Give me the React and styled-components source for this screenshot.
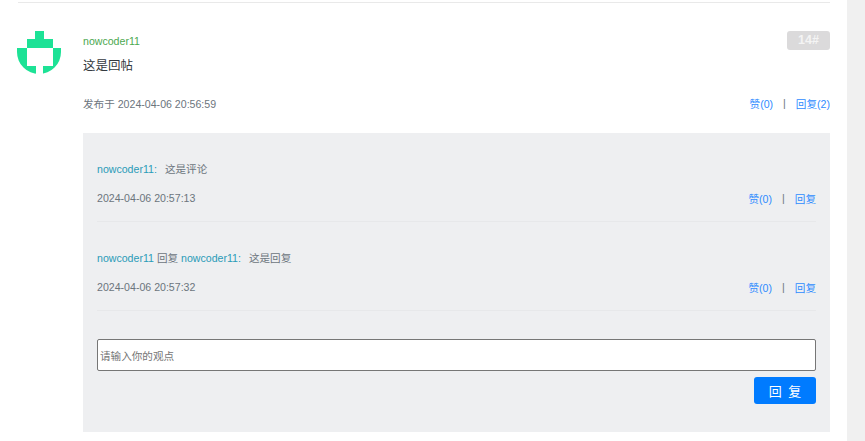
import React from 'react';
import styled, { createGlobalStyle } from 'styled-components';

const GlobalStyle = createGlobalStyle`
  html, body {
    margin: 0;
    padding: 0;
    background: #fff;
    overflow: hidden;
  }
  body {
    font-family: "Liberation Sans", Arial, "Noto Sans CJK SC", sans-serif;
    font-size: 10.6px;
    color: #6c757d;
  }
`;

const Page = styled.div`
  display: flex;
  width: 865px;
  height: 441px;
  overflow: hidden;
`;

const Content = styled.div`
  flex: 1;
  padding: 2px 17px 0 18px;
`;

const Scrollbar = styled.div`
  width: 18px;
  background: #f0f0f0;
`;

const Post = styled.div`
  display: flex;
  border-top: 1px solid #e9e9e9;
  padding-top: 28px;
`;

const Avatar = styled.svg`
  flex: none;
  width: 44px;
  height: 44px;
  margin-left: -1px;
  margin-right: 22px;
`;

const Body = styled.div`
  flex: 1;
  min-width: 0;
`;

const TopRow = styled.div`
  display: flex;
  justify-content: space-between;
  align-items: flex-start;
  height: 25px;
`;

const UserName = styled.span`
  font-size: 10.6px;
  line-height: 20px;
  color: #4ca84f;
`;

const Floor = styled.span`
  width: 43px;
  height: 19px;
  border-radius: 3px;
  background: #dbdadb;
  color: #f4f4f4;
  font-size: 12.5px;
  font-weight: 700;
  line-height: 19px;
  text-align: center;
`;

const PostText = styled.div`
  font-size: 12.5px;
  line-height: 20px;
  color: #343a40;
`;

const MetaRow = styled.div`
  display: flex;
  justify-content: space-between;
  align-items: center;
  height: 16px;
  margin-top: ${p => p.$top}px;
  color: #6c757d;
`;

const Links = styled.div`
  display: flex;
  align-items: center;
  gap: 10px;
  color: #2f8cff;
`;

const Sep = styled.span`
  color: #6c757d;
`;

const CommentBox = styled.div`
  margin-top: 22px;
  height: 299px;
  background: #eeeff1;
  padding: 0 14px;
`;

const Comment = styled.div`
  box-sizing: border-box;
  height: 89px;
  padding-top: 28px;
  border-bottom: 1px solid #e7e8ea;
`;

const CommentLine = styled.div`
  line-height: 16px;
  height: 16px;
  color: #6c757d;
`;

const Who = styled.span`
  color: #2a9bb8;
`;

const Said = styled.span`
  margin-left: 8px;
`;

const InputBox = styled.div`
  margin-top: 28px;
  display: flex;
  align-items: center;
  box-sizing: border-box;
  height: 32px;
  background: #fff;
  border: 1px solid #767676;
  border-radius: 2px;
  padding-left: 2px;
  color: #757575;
`;

const ButtonRow = styled.div`
  display: flex;
  justify-content: flex-end;
  margin-top: 6px;
`;

const ReplyButton = styled.button`
  width: 62px;
  height: 27px;
  padding: 0;
  border: 0;
  border-radius: 3px;
  background: #007bff;
  color: #fff;
  font-family: inherit;
  font-size: 13px;
  word-spacing: 3px;
`;

const Logo = () => (
  <Avatar viewBox="0 0 44 44" aria-hidden="true">
    <path
      fill="#1de296"
      d="M18 0h9v8h9v9h8v4a22 22 0 0 1-44 0v-4h10V8h8z"
    />
    <path fill="#fff" d="M10 17h26v18H26v9h-7v-9h-9z" />
  </Avatar>
);

const comments = [
  {
    id: 1,
    line: (
      <>
        <Who>nowcoder11:</Who>
        <Said>这是评论</Said>
      </>
    ),
    time: '2024-04-06 20:57:13',
  },
  {
    id: 2,
    line: (
      <>
        <Who>nowcoder11</Who> 回复 <Who>nowcoder11:</Who>
        <Said>这是回复</Said>
      </>
    ),
    time: '2024-04-06 20:57:32',
  },
];

export default function App() {
  return (
    <Page>
      <GlobalStyle />
      <Content>
        <Post>
          <Logo />
          <Body>
            <TopRow>
              <UserName>nowcoder11</UserName>
              <Floor>14#</Floor>
            </TopRow>
            <PostText>这是回帖</PostText>
            <MetaRow $top={19}>
              <span>发布于 2024-04-06 20:56:59</span>
              <Links>
                <span>赞(0)</span>
                <Sep>|</Sep>
                <span>回复(2)</span>
              </Links>
            </MetaRow>
            <CommentBox>
              {comments.map(c => (
                <Comment key={c.id}>
                  <CommentLine>{c.line}</CommentLine>
                  <MetaRow $top={13}>
                    <span>{c.time}</span>
                    <Links>
                      <span>赞(0)</span>
                      <Sep>|</Sep>
                      <span>回复</span>
                    </Links>
                  </MetaRow>
                </Comment>
              ))}
              <InputBox>请输入你的观点</InputBox>
              <ButtonRow>
                <ReplyButton>回 复</ReplyButton>
              </ButtonRow>
            </CommentBox>
          </Body>
        </Post>
      </Content>
      <Scrollbar />
    </Page>
  );
}
